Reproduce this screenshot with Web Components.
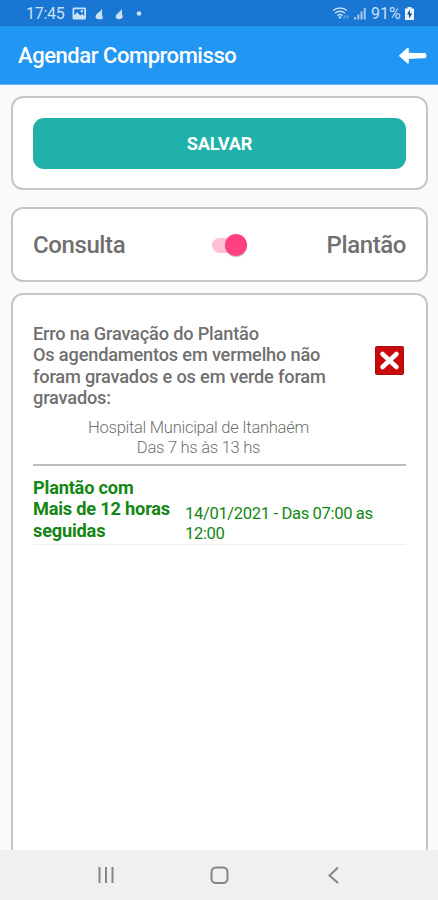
<!DOCTYPE html>
<html lang="pt-BR">
<head>
<meta charset="utf-8">
<title>Agendar Compromisso</title>
<style>
body {
  margin: 0;
  overflow: hidden;
  font-family: Roboto, "Liberation Sans", sans-serif;
}
</style>
</head>
<body>
<schedule-screen></schedule-screen>
<script>
function define(name, html) {
  const template = document.createElement('template');
  template.innerHTML = html;

  window.customElements.define(name, class extends HTMLElement {
    constructor() {
      super();
      this.attachShadow({mode: 'open'});
      this.shadowRoot.appendChild(template.content.cloneNode(true));
    }
  });
}

define('status-bar', `
<style>
:host {
  display: flex;
  align-items: center;
  justify-content: space-between;
  box-sizing: border-box;
  height: 26px;
  padding: 1px 23px 0 26px;
  background: #1976d2;
  color: #c9e0f7;
  font-size: 16px;
  line-height: 26px;
}

div {
  display: flex;
  align-items: center;
}

svg {
  display: block;
  fill: currentColor;
}

.time {
  width: 46px;
  letter-spacing: -0.3px;
}

.battery {
  width: 33px;
}
</style>
<div>
  <span class="time">17:45</span>
  <svg width="80" height="16" viewBox="0 0 80 16">
    <path fill-rule="evenodd" d="M2 1.5h10.500q1.500 0 1.500 1.500v9q0 1.500-1.500 1.500H2Q.5 13.500.5 12V3Q.5 1.500 2 1.500zM2.300 3.200v6l3-3 3 3.300 1.600-1.600 2.300 2.100V3.200z"/>
    <circle cx="9.800" cy="5.200" r="1.200"/>
    <path d="M30 2.500c-.5 3-6.500 5-6.500 8.300 0 1.600 1.300 2.500 2.900 2.500h3.800c.8-1.400.7-3-.2-4.600z"/>
    <path d="M50 2.500c-.5 3-6.300 5-6.300 8.300 0 1.600 1.300 2.500 2.900 2.500 2.500 0 4.200-1 4.200-2.800 0-1-.8-1.600-.8-3z"/>
    <circle cx="67" cy="7.500" r="2.300"/>
  </svg>
</div>
<div>
  <svg width="39" height="16" viewBox="0 0 39 16">
    <g fill="none" stroke="currentColor" stroke-width="1.500">
      <path d="M1 4.500q7-5 14 0M3 7q5-3.600 10 0M5.400 9.500q2.600-1.800 5.200 0"/>
    </g>
    <path d="M8 13l-2-2.500h4z"/>
    <path d="M12.500 8.500v5l-1.800-2h3.600zM15.500 13.500v-5l-1.500 2h3z" opacity=".6"/>
    <path d="M22 11h2v2.500h-2zM25.300 8.500h2v5h-2zM28.500 5.500h2v8h-2zM31.700 2h2v11.500h-2z" opacity=".8"/>
  </svg>
  <span class="battery">91%</span>
  <svg width="11" height="16" viewBox="0 0 11 16">
    <path fill="#eaf4ff" d="M3.500 1h4v1.500H10v11.500H1V2.500h2.500z"/>
    <path fill="#164a86" d="M6 3.500L3 8.500h2v4l3.200-5H6z"/>
  </svg>
</div>
`);

define('app-bar', `
<style>
:host {
  display: flex;
  align-items: center;
  justify-content: space-between;
  box-sizing: border-box;
  height: 59px;
  padding: 1px 11px 0 18px;
  background: #2196f3;
  color: #fff;
  border-bottom: 1px solid #5eb5f9;
}

span {
  font-size: 22px;
  font-weight: 500;
  letter-spacing: -0.45px;
}

svg {
  display: block;
}
</style>
<span><slot></slot></span>
<svg width="29" height="20" viewBox="0 0 29 20">
  <path fill="#fff" stroke="#fff" stroke-width="1.500" stroke-linejoin="round" d="M1.800 9.800L10 2.200V7.200Q18 8 27 7.700Q28.500 9.700 27 11.600Q18 11.700 10 12.300V17z"/>
</svg>
`);

define('outlined-card', `
<style>
:host {
  display: block;
  box-sizing: border-box;
  padding: 20px;
  background: #fff;
  border: 2px solid #c6c6c6;
  border-radius: 12px;
}
</style>
<slot></slot>
`);

define('save-button', `
<style>
:host {
  display: block;
}

button {
  display: block;
  width: 100%;
  height: 51px;
  padding: 0;
  border: 0;
  border-radius: 11px;
  background: #20b2aa;
  color: #fff;
  font: bold 18.2px Roboto, "Liberation Sans", sans-serif;
  letter-spacing: -0.15px;
}
</style>
<button type="button"><slot></slot></button>
`);

define('toggle-switch', `
<style>
:host {
  display: flex;
  align-items: center;
  justify-content: flex-end;
  width: 35px;
  height: 15px;
  border-radius: 8px;
  background: #ffc0d5;
}

span {
  flex: none;
  width: 22px;
  height: 22px;
  border-radius: 50%;
  background: #ff4081;
  box-shadow: 0 1px 1px rgba(0, 0, 0, .25);
}
</style>
<span></span>
`);

define('kind-selector', `
<style>
:host {
  display: grid;
  grid-template-columns: 1fr auto 1fr;
  align-items: center;
  height: 32px;
  color: #707070;
  font-size: 24px;
  font-weight: 500;
  letter-spacing: -0.4px;
}

span:last-child {
  text-align: right;
}

toggle-switch {
  position: relative;
  left: 10px;
}
</style>
<span>Consulta</span>
<toggle-switch></toggle-switch>
<span>Plantão</span>
`);

define('error-message', `
<style>
:host {
  display: flex;
  justify-content: space-between;
  align-items: center;
  padding-right: 2px;
  color: #707070;
  font-size: 18.2px;
  font-weight: 500;
  line-height: 21.3px;
  letter-spacing: -0.18px;
}

svg {
  display: block;
  flex: none;
  margin-top: -10px;
}
</style>
<div><slot></slot></div>
<svg width="29" height="29" viewBox="0 0 29 29">
  <rect x=".5" y=".5" width="28" height="28" rx="1" fill="#c90b0e" stroke="#a90c0c"/>
  <path d="M7.500 8l14 13M21.500 8l-14 13" stroke="#fff" stroke-width="4.500" stroke-linecap="round"/>
</svg>
`);

define('place-info', `
<style>
:host {
  display: block;
  padding: 10px 42px 7px 0;
  border-bottom: 2px solid #bdbdbd;
  color: #707070;
  font-size: 16.6px;
  font-weight: 300;
  line-height: 19.5px;
  letter-spacing: -0.3px;
  text-align: center;
}
</style>
<slot></slot>
`);

define('shift-row', `
<style>
:host {
  display: grid;
  grid-template-columns: 152px 1fr;
  align-items: end;
  padding-top: 11px;
  border-bottom: 1px solid #eee;
  color: #138613;
}

.kind {
  padding-bottom: 3px;
  font-size: 18.2px;
  font-weight: bold;
  line-height: 21.3px;
  letter-spacing: -0.2px;
}

.date {
  padding-bottom: 1px;
  font-size: 16.6px;
  line-height: 19.5px;
  letter-spacing: -0.36px;
}
</style>
<div class="kind"><slot name="kind"></slot></div>
<div class="date"><slot></slot></div>
`);

define('navigation-bar', `
<style>
:host {
  display: grid;
  grid-template-columns: repeat(3, 114px);
  justify-content: center;
  justify-items: center;
  align-items: center;
  height: 50px;
  background: #f0f0f0;
}

svg {
  display: block;
  fill: none;
  stroke: #858585;
  stroke-width: 2;
}
</style>
<svg width="20" height="20" viewBox="0 0 20 20"><path d="M4.500 2v16M11 2v16M17.500 2v16"/></svg>
<svg width="20" height="20" viewBox="0 0 20 20"><rect x="2.500" y="2.500" width="16" height="15.500" rx="4.500"/></svg>
<svg width="20" height="20" viewBox="0 0 20 20"><path d="M15 2.500L6.500 10.500l8.500 7.500"/></svg>
`);

define('schedule-screen', `
<style>
:host {
  display: flex;
  flex-direction: column;
  height: 900px;
  background: #fafafa;
}

main {
  display: flex;
  flex: 1;
  flex-direction: column;
  min-height: 0;
  padding: 11px 10px 0 11px;
  overflow: hidden;
}

.save {
  flex: none;
  height: 94px;
  margin-bottom: 17px;
}

.kind {
  flex: none;
  height: 75px;
  margin-bottom: 11px;
}

.result {
  flex: 1;
  padding-top: 28px;
  border-bottom: 0;
  border-radius: 12px 12px 0 0;
}
</style>
<status-bar></status-bar>
<app-bar>Agendar Compromisso</app-bar>
<main>
  <outlined-card class="save"><save-button>SALVAR</save-button></outlined-card>
  <outlined-card class="kind"><kind-selector></kind-selector></outlined-card>
  <outlined-card class="result">
    <error-message>Erro na Gravação do Plantão<br>Os agendamentos em vermelho não<br>foram gravados e os em verde foram<br>gravados:</error-message>
    <place-info>Hospital Municipal de Itanhaém<br>Das 7 hs às 13 hs</place-info>
    <shift-row><span slot="kind">Plantão com<br>Mais de 12 horas<br>seguidas</span>14/01/2021 - Das 07:00 as<br>12:00</shift-row>
  </outlined-card>
</main>
<navigation-bar></navigation-bar>
`);
</script>
</body>
</html>
